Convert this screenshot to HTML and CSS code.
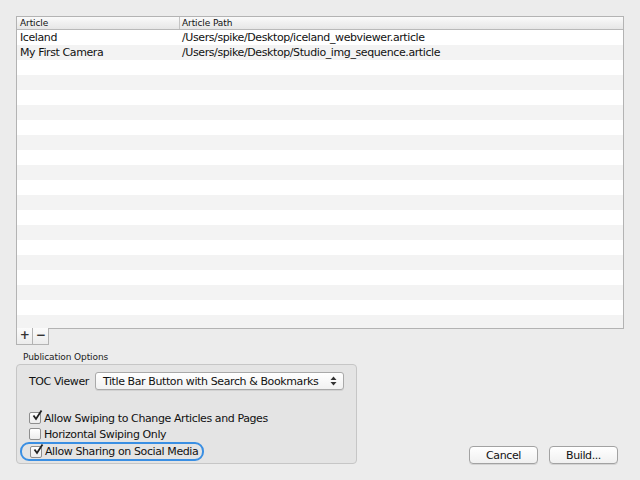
FILE: index.html
```html
<!DOCTYPE html>
<html lang="en">
<head>
  <meta charset="UTF-8" />
  <title>Build Options</title>
  <link rel="stylesheet" href="styles.css">
</head>
<body>
  <div class="window">
    <div class="table">
      <div class="table-head">
        <div class="col col-name">Article</div>
        <div class="col col-path">Article Path</div>
      </div>
      <div class="table-body">
        <div class="row">
          <div class="col col-name">Iceland</div>
          <div class="col col-path">/Users/spike/Desktop/iceland_webviewer.article</div>
        </div>
        <div class="row">
          <div class="col col-name">My First Camera</div>
          <div class="col col-path">/Users/spike/Desktop/Studio_img_sequence.article</div>
        </div>
        <div class="filler"></div>
      </div>
    </div>

    <div class="seg">
      <span class="seg-btn">+</span>
      <span class="seg-btn">&minus;</span>
    </div>

    <div class="bottom">
      <div class="options">
        <div class="group-title">Publication Options</div>
        <div class="group">
          <div class="field">
            <span class="field-label">TOC Viewer</span>
            <div class="popup">
              <span>Title Bar Button with Search &amp; Bookmarks</span>
              <svg class="arrows" width="7" height="10" viewBox="0 0 7 10">
                <path d="M0.5 4 L3.5 0.5 L6.5 4 Z M0.5 6 L3.5 9.5 L6.5 6 Z" fill="#333"/>
              </svg>
            </div>
          </div>

          <div class="checks">
            <label class="check">
              <span class="box on"><svg width="12" height="12" viewBox="0 0 12 12"><path d="M2.5 5.5 L5 9 L10.5 0.5" fill="none" stroke="#222" stroke-width="1.8"/></svg></span>
              Allow Swiping to Change Articles and Pages
            </label>
            <label class="check">
              <span class="box"></span>
              Horizontal Swiping Only
            </label>
            <label class="check focus">
              <span class="box on"><svg width="12" height="12" viewBox="0 0 12 12"><path d="M2.5 5.5 L5 9 L10.5 0.5" fill="none" stroke="#222" stroke-width="1.8"/></svg></span>
              Allow Sharing on Social Media
            </label>
          </div>
        </div>
      </div>

      <div class="actions">
        <button class="btn">Cancel</button>
        <button class="btn">Build...</button>
      </div>
    </div>
  </div>
</body>
</html>
```

FILE: styles.css
```css
body {
  margin: 0;
  padding: 0;
  background: #ececec;
  font-family: 'DejaVu Sans', 'Lucida Grande', Verdana, sans-serif;
  font-size: 11px;
  letter-spacing: -0.4px;
  color: #111;
  white-space: nowrap;
}

.window {
  width: 640px;
  height: 480px;
  padding: 16px;
  box-sizing: border-box;
}

.table {
  width: 608px;
  border: 1px solid #b3b3b3;
  box-sizing: border-box;
  background: #fff;
}

.table-head {
  display: flex;
  height: 12px;
  line-height: 12px;
  font-size: 9px;
  letter-spacing: -0.1px;
  background: linear-gradient(#fafafa, #e6e6e6);
  border-bottom: 1px solid #b9b9b9;
}

.table-head .col-path {
  border-left: 1px solid #c4c4c4;
  padding-left: 2px;
}

.col-name {
  width: 159px;
  padding-left: 3px;
}

.col-path {
  flex: 1;
  padding-left: 3px;
}

.table-body {
  height: 298px;
}

.row {
  display: flex;
  height: 15px;
  line-height: 15px;
}

.row:nth-child(even) {
  background: #f3f3f3;
}

.filler {
  height: 268px;
  background: repeating-linear-gradient(#fff 0, #fff 15px, #f3f3f3 15px, #f3f3f3 30px);
}

.seg {
  display: flex;
  margin-top: -1px;
}

.seg-btn {
  width: 15px;
  height: 16px;
  line-height: 15px;
  text-align: center;
  font-size: 12px;
  font-weight: bold;
  color: #333;
  border: 1px solid #b3b3b3;
  border-top: none;
  background: linear-gradient(#fbfbfb, #ececec);
}

.seg-btn + .seg-btn {
  border-left: none;
}

.bottom {
  display: flex;
  justify-content: space-between;
  align-items: flex-end;
  margin-top: 6px;
}

.group-title {
  font-size: 9px;
  letter-spacing: -0.1px;
  padding-left: 7px;
  height: 13px;
  line-height: 13px;
  color: #222;
}

.group {
  width: 341px;
  height: 100px;
  box-sizing: border-box;
  border: 1px solid #c6c6c6;
  border-radius: 4px;
  background: #e4e4e4;
  padding: 7px 12px 0 3px;
}

.field {
  display: flex;
  align-items: center;
  gap: 6px;
  padding-left: 9px;
}

.popup {
  flex: 1;
  display: flex;
  justify-content: space-between;
  align-items: center;
  height: 16px;
  padding: 0 6px 0 7px;
  background: linear-gradient(#ffffff, #f1f1f1);
  border: 1px solid #a9a9a9;
  border-radius: 3px;
  box-shadow: 0 1px 0 rgba(0, 0, 0, 0.08);
}

.checks {
  margin-top: 20px;
}

.check {
  display: flex;
  align-items: center;
  gap: 3px;
  height: 16px;
  padding-left: 9px;
}

.box {
  width: 10px;
  height: 10px;
  border: 1px solid #8e8e8e;
  border-radius: 2px;
  background: linear-gradient(#fff, #ececec);
  position: relative;
}

.box svg {
  position: absolute;
  left: 1px;
  top: -3px;
}

.focus {
  width: 172px;
  padding-left: 8px;
  height: 15px;
  border: 2px solid #3a8fe3;
  border-radius: 9px;
}

.actions {
  display: flex;
  gap: 11px;
  margin-right: 6px;
}

.btn {
  width: 69px;
  height: 18px;
  font-family: inherit;
  font-size: 11px;
  letter-spacing: -0.4px;
  color: #111;
  padding: 0;
  background: linear-gradient(#ffffff, #f0f0f0);
  border: 1px solid #a2a2a2;
  border-radius: 4px;
  box-shadow: 0 1px 0 rgba(0, 0, 0, 0.1);
}
```
